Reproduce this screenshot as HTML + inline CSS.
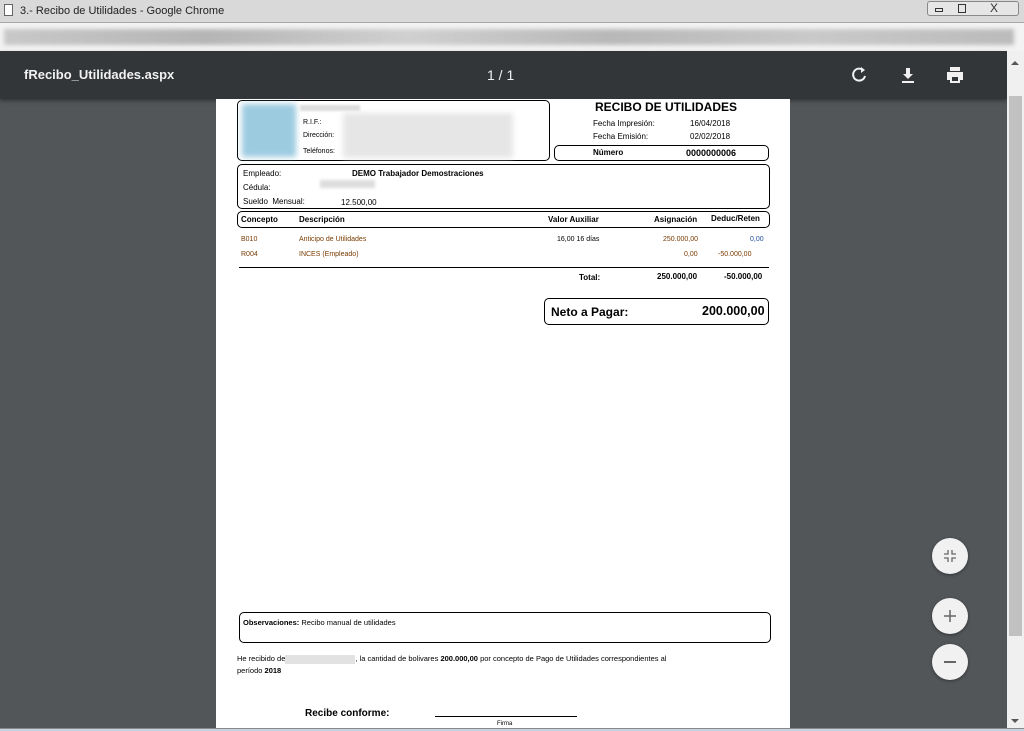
<!DOCTYPE html>
<html><head><meta charset="utf-8"><style>
*{margin:0;padding:0;box-sizing:border-box}
body{width:1024px;height:731px;overflow:hidden;background:#525659;font-family:"Liberation Sans",sans-serif;position:relative}
.a{position:absolute}
.t{font-size:8px;color:#000;white-space:nowrap}
.b{font-weight:bold}
.box{position:absolute;border:1px solid #000;border-radius:5px}
.fab{position:absolute;width:36px;height:36px;border-radius:50%;background:#f1f1f1;box-shadow:0 1px 3px rgba(0,0,0,.4)}
.br{color:#7a3a00}
.bl{color:#1f4e9e}
</style></head><body>
<div class="a" style="left:0;top:0;width:1024px;height:23px;background:#d9d9d9;border-bottom:1px solid #a8a8a8"></div>
<div class="a" style="left:4px;top:4px;width:9px;height:12px;border:1px solid #666;background:#fff"></div>
<div class="a t" style="left:20px;top:5px;font-size:11px;color:#222">3.- Recibo de Utilidades - Google Chrome</div>
<div class="a" style="left:927px;top:1px;width:92px;height:15px;border:1px solid #888;border-radius:3px;background:#e6e6e6"></div>
<div class="a" style="left:935px;top:8px;width:8px;height:4px;border:1px solid #333"></div>
<div class="a" style="left:958px;top:4px;width:8px;height:9px;border:1px solid #333"></div>
<div class="a t" style="left:990px;top:1px;font-size:12px;color:#333">X</div>
<div class="a" style="left:0;top:23px;width:1024px;height:28px;background:#f3f3f3"></div>
<div class="a" style="left:4px;top:29px;width:1010px;height:16px;background:linear-gradient(90deg,#c8c8c8,#b5b5b5 20%,#d0d0d0 40%,#b8b8b8 60%,#c9c9c9 80%,#bbb);filter:blur(2px)"></div>
<div class="a" style="left:0;top:51px;width:1007px;height:48px;background:#323639;box-shadow:0 2px 4px rgba(0,0,0,.4)"></div>
<div class="a t" style="left:24px;top:67px;font-size:13px;color:#f1f1f1;font-weight:bold">fRecibo_Utilidades.aspx</div>
<div class="a t" style="left:487px;top:67px;font-size:14px;color:#f1f1f1">1 / 1</div>
<svg class="a" style="left:851px;top:66px" width="18" height="18" viewBox="0 0 18 18"><path d="M12 4a6 6 0 1 0 2 6" stroke="#f1f1f1" stroke-width="2" fill="none"/><path d="M10 1l4 3-4 3z" fill="#f1f1f1"/></svg>
<svg class="a" style="left:900px;top:66px" width="16" height="18" viewBox="0 0 16 18"><path d="M6 2h4v6h3l-5 5-5-5h3z M2 15h12v2H2z" fill="#f1f1f1"/></svg>
<svg class="a" style="left:945px;top:66px" width="20" height="18" viewBox="0 0 20 18"><path d="M5 1h10v4H5z M2 6h16v8h-3v3H5v-3H2z" fill="#f1f1f1"/><rect x="7" y="11" width="6" height="4" fill="#323639"/></svg>
<div class="a" style="left:1007px;top:51px;width:17px;height:680px;background:#f0f0f0"></div>
<div class="a" style="left:1009px;top:96px;width:13px;height:540px;background:#c1c1c1"></div>
<div class="a" style="left:1011px;top:57px;width:0;height:0;border:4px solid transparent;border-bottom-color:#555"></div>
<div class="a" style="left:1011px;top:719px;width:0;height:0;border:4px solid transparent;border-top-color:#555"></div>
<div class="a" style="left:216px;top:99px;width:574px;height:632px;background:#fff"></div>
<div class="box" style="left:237px;top:100px;width:313px;height:61px"></div>
<div class="a" style="left:242px;top:104px;width:54px;height:53px;background:#9ccbe0;filter:blur(3px)"></div>
<div class="a" style="left:300px;top:105px;width:60px;height:6px;background:#ddd;filter:blur(1px)"></div>
<div class="a" style="left:343px;top:113px;width:170px;height:45px;background:#e6e6e6;filter:blur(3px)"></div>
<div class="a t" style="left:303px;top:119px;font-size:7px">R.I.F.:</div>
<div class="a t" style="left:303px;top:132px;font-size:7px">Dirección:</div>
<div class="a t" style="left:303px;top:148px;font-size:7px">Teléfonos:</div>
<div class="a t b" style="left:595px;top:100px;font-size:12px">RECIBO DE UTILIDADES</div>
<div class="a t" style="left:593px;top:119px">Fecha Impresión:</div>
<div class="a t" style="left:690px;top:119px">16/04/2018</div>
<div class="a t" style="left:593px;top:132px">Fecha Emisión:</div>
<div class="a t" style="left:690px;top:132px">02/02/2018</div>
<div class="box" style="left:554px;top:145px;width:215px;height:16px"></div>
<div class="a t b" style="left:593px;top:148px">Número</div>
<div class="a t b" style="left:686px;top:148px;font-size:9px">0000000006</div>
<div class="box" style="left:237px;top:164px;width:533px;height:45px"></div>
<div class="a t" style="left:243px;top:169px">Empleado:</div>
<div class="a t b" style="left:352px;top:169px">DEMO Trabajador Demostraciones</div>
<div class="a t" style="left:243px;top:183px">Cédula:</div>
<div class="a" style="left:320px;top:180px;width:55px;height:8px;background:#ddd;filter:blur(1.5px)"></div>
<div class="a t" style="left:243px;top:197px">Sueldo &nbsp;Mensual:</div>
<div class="a t" style="left:341px;top:198px">12.500,00</div>
<div class="box" style="left:237px;top:211px;width:533px;height:17px"></div>
<div class="a t b" style="left:241px;top:215px">Concepto</div>
<div class="a t b" style="left:299px;top:215px">Descripción</div>
<div class="a t b" style="left:548px;top:215px">Valor Auxiliar</div>
<div class="a t b" style="left:654px;top:215px">Asignación</div>
<div class="a t b" style="left:711px;top:214px">Deduc/Reten</div>
<div class="a t br" style="left:241px;top:236px;font-size:7px">B010</div>
<div class="a t br" style="left:299px;top:236px;font-size:7px">Anticipo de Utilidades</div>
<div class="a t" style="left:557px;top:236px;font-size:7px">16,00 16 días</div>
<div class="a t br" style="left:663px;top:236px;font-size:7px">250.000,00</div>
<div class="a t bl" style="left:750px;top:236px;font-size:7px">0,00</div>
<div class="a t br" style="left:241px;top:251px;font-size:7px">R004</div>
<div class="a t br" style="left:299px;top:251px;font-size:7px">INCES (Empleado)</div>
<div class="a t br" style="left:684px;top:251px;font-size:7px">0,00</div>
<div class="a t br" style="left:718px;top:251px;font-size:7px">-50.000,00</div>
<div class="a" style="left:239px;top:267px;width:530px;height:1px;background:#000"></div>
<div class="a t b" style="left:579px;top:273px">Total:</div>
<div class="a t b" style="left:657px;top:272px">250.000,00</div>
<div class="a t b" style="left:724px;top:272px">-50.000,00</div>
<div class="box" style="left:544px;top:298px;width:225px;height:27px"></div>
<div class="a t b" style="left:551px;top:305px;font-size:12px">Neto a Pagar:</div>
<div class="a t b" style="left:702px;top:304px;font-size:12.5px">200.000,00</div>
<div class="box" style="left:239px;top:612px;width:532px;height:31px"></div>
<div class="a t" style="left:243px;top:618px;font-size:7.5px"><b>Observaciones:</b> Recibo manual de utilidades</div>
<div class="a t" style="left:237px;top:654px;font-size:7.5px">He recibido de<span style="display:inline-block;width:70px;height:9px;background:#e2e2e2;vertical-align:middle"></span>, la cantidad de bolivares <b>200.000,00</b> por concepto de Pago de Utilidades correspondientes al</div>
<div class="a t" style="left:237px;top:666px;font-size:7.5px">período <b>2018</b></div>
<div class="a t b" style="left:305px;top:708px;font-size:10px">Recibe conforme:</div>
<div class="a" style="left:435px;top:716px;width:142px;height:1px;background:#000"></div>
<div class="a t" style="left:497px;top:721px;font-size:6px">Firma</div>
<div class="fab" style="left:932px;top:538px"></div>
<svg class="a" style="left:943px;top:549px" width="14" height="14" viewBox="0 0 14 14"><path d="M5 1v4H1M9 1v4h4M5 13V9H1M9 13V9h4" stroke="#666" stroke-width="1.3" fill="none"/></svg>
<div class="fab" style="left:932px;top:598px"></div>
<svg class="a" style="left:943px;top:609px" width="14" height="14" viewBox="0 0 14 14"><path d="M7 1v12M1 7h12" stroke="#666" stroke-width="1.5"/></svg>
<div class="fab" style="left:932px;top:644px"></div>
<div class="a" style="left:944px;top:661px;width:12px;height:1.5px;background:#666"></div>
<div class="a" style="left:0;top:728px;width:1024px;height:3px;background:#c5d4e3;border-top:1px solid #888"></div>
</body></html>
